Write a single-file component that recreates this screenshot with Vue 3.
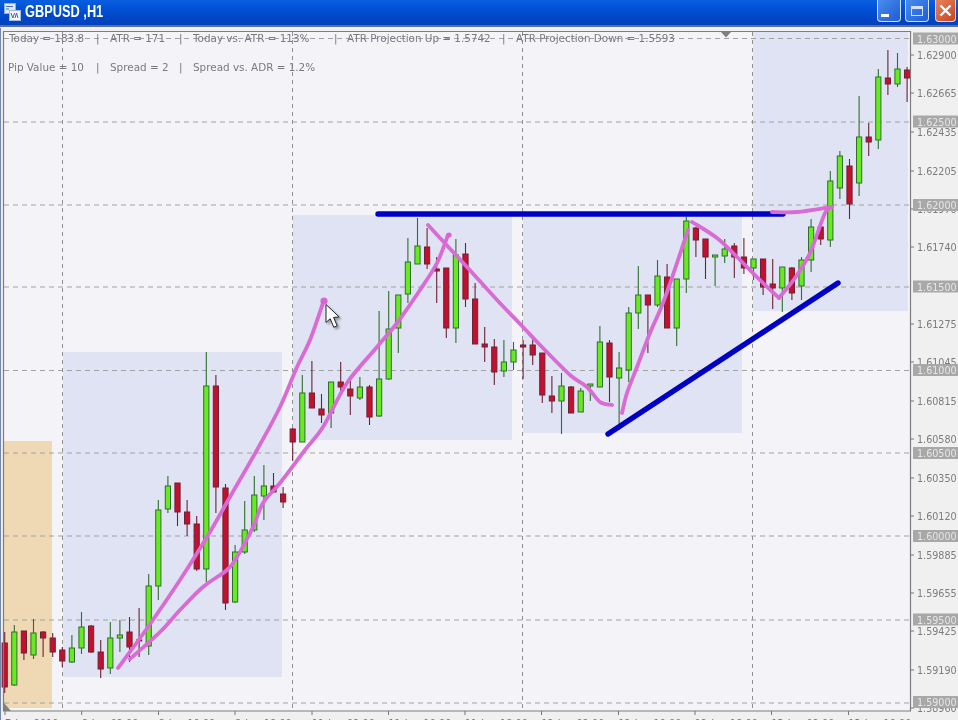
<template>
  <div class="window">
    <header class="titlebar">
      <svg class="app-icon" width="17" height="18" viewBox="0 0 17 18">
        <rect x="0.5" y="0.5" width="11" height="10" fill="#dfe8f6" stroke="#8fb0e0" />
        <rect x="5.5" y="7.5" width="11" height="10" fill="#f4f7fc" stroke="#a0bce6" />
        <path d="M2 3.5h7M2 6h3" stroke="#4a6fb0" />
        <path d="M7 10l1.8 5 1.8-5M11 15l1.5-5 1.5 5" stroke="#3f66a8" fill="none" />
      </svg>
      <span class="title">GBPUSD ,H1</span>
      <div class="win-buttons">
        <button class="win-btn">
          <span class="min-glyph"></span>
        </button>
        <button class="win-btn">
          <span class="max-glyph"></span>
        </button>
        <button class="win-btn close">
          <svg width="13" height="13" viewBox="0 0 13 13">
            <path d="M1.5 1.5l10 10M11.5 1.5l-10 10" stroke="#fff" stroke-width="2.4" />
          </svg>
        </button>
      </div>
    </header>

    <div class="frame">
      <svg class="chart" viewBox="0 28 958 692" width="958" height="692">
        <rect x="4" y="32" width="906" height="679" fill="#f4f4f8" />
        <!-- session boxes -->
        <rect x="4" y="441" width="48" height="267" fill="#efd9b5" />
        <rect
          v-for="b in boxes"
          :key="b.x"
          :x="b.x"
          :y="b.y"
          :width="b.w"
          :height="b.h"
          fill="#dfe3f4"
        />

        <!-- grid -->
        <line
          v-for="y in gridY"
          :key="'h' + y"
          x1="4"
          x2="910"
          :y1="y"
          :y2="y"
          class="grid"
        />
        <line
          v-for="x in gridX"
          :key="'v' + x"
          :x1="x"
          :x2="x"
          y1="32"
          y2="711"
          class="grid vertical"
        />

        <!-- candles -->
        <g v-for="c in candleList" :key="c.i">
          <line :x1="c.x" :x2="c.x" :y1="c.high" :y2="c.low" :stroke="c.wick" stroke-width="1.1" />
          <rect
            :x="c.x - 2.6"
            :y="c.top"
            width="5.2"
            :height="c.height"
            :fill="c.fill"
            :stroke="c.wick"
            stroke-width="1"
          />
        </g>

        <!-- hand drawn lines -->
        <line x1="378" y1="214" x2="783" y2="214" class="blue" />
        <line x1="608" y1="434" x2="838" y2="283" class="blue" />
        <path v-for="(d, i) in strokes" :key="i" :d="d" class="pink" />
        <circle cx="324" cy="301" r="3.6" fill="#d765d2" />
        <circle cx="449" cy="235" r="2.6" fill="#d765d2" />

        <!-- frame lines -->
        <path d="M3.5 711V31.5H910.5V711H3.5Z" class="frame-line" />
        <rect x="0" y="28" width="1" height="692" fill="#7486a8" />
        <path d="M721 32h10l-5 5.5z" fill="#808080" />
        <path d="M4 703v8h7z" fill="#808080" />

        <!-- info text -->
        <text v-for="t in infoTexts" :key="t.x + t.text" :x="t.x" :y="t.y" class="info">{{ t.text }}</text>

        <!-- price axis -->
        <g v-for="p in prices" :key="p.text">
          <line x1="910" x2="914" :y1="p.y" :y2="p.y" stroke="#777" />
          <text x="917" :y="p.y + 4" class="price">{{ p.text }}</text>
        </g>
        <g v-for="p in boxedPrices" :key="p.text">
          <rect x="913" :y="p.y - 6" width="45" height="12" fill="#a8a8a8" />
          <text x="917" :y="p.y + 4" class="price boxed">{{ p.text }}</text>
        </g>

        <!-- time axis -->
        <g v-for="t in times" :key="t.x">
          <line :x1="t.x" :x2="t.x" y1="711" y2="715" stroke="#777" />
          <text :x="t.x" y="727" class="time">{{ t.text }}</text>
        </g>

        <!-- mouse pointer -->
        <path
          d="M326 304.5v18l4.2-3.8 3.6 8.6 3.4-1.5-3.6-8.4 5.6-.4z"
          fill="#fff"
          stroke="#222"
          stroke-width="1"
          class="pointer"
        />
      </svg>
    </div>
  </div>
</template>

<script setup>
import { computed } from 'vue'

const boxes = [
  { x: 63, y: 352, w: 219, h: 325 },
  { x: 293, y: 215, w: 219, h: 225 },
  { x: 523, y: 214, w: 219, h: 219 },
  { x: 753, y: 32, w: 155, h: 279 },
]

const gridY = [38.5, 122, 205, 287, 370.5, 453, 536, 620, 703]
const gridX = [62.5, 292.5, 522.5, 752.5]

// top, bottom, high, low in page pixels, one row per hourly bar. up = green
const bars = [
  [643, 687, 632, 693, 0], [632, 685, 625, 686, 1], [631, 653, 631, 660, 0], [633, 655, 619, 659, 1],
  [632, 638, 631, 657, 0], [638, 652, 633, 657, 0], [650, 661, 647, 667, 0], [648, 662, 635, 663, 1],
  [627, 648, 612, 654, 1], [626, 652, 625, 653, 0], [652, 669, 640, 678, 0], [638, 668, 622, 674, 1],
  [635, 638, 620, 652, 1], [632, 647, 617, 662, 0], [640, 641, 608, 657, 0], [586, 646, 574, 655, 1],
  [510, 586, 500, 600, 1], [486, 509, 476, 513, 1], [483, 512, 483, 526, 0], [512, 524, 500, 536, 0],
  [524, 569, 516, 571, 0], [386, 569, 352, 582, 1], [386, 487, 375, 513, 0], [488, 603, 484, 610, 0],
  [552, 602, 545, 603, 1], [530, 552, 501, 554, 1], [495, 530, 476, 532, 1], [486, 496, 465, 520, 1],
  [486, 492, 473, 493, 0], [494, 502, 487, 508, 0], [429, 442, 428, 461, 0], [393, 442, 375, 442, 1],
  [393, 408, 361, 408, 0], [409, 415, 394, 423, 0], [382, 413, 382, 428, 1], [382, 387, 362, 393, 0],
  [389, 396, 380, 415, 0], [387, 398, 377, 400, 1], [387, 417, 385, 425, 0], [379, 416, 311, 417, 1],
  [329, 379, 291, 380, 1], [295, 328, 295, 353, 1], [262, 294, 238, 303, 1], [246, 264, 218, 264, 1],
  [247, 264, 228, 269, 0], [269, 271, 257, 303, 0], [268, 328, 268, 338, 0], [255, 328, 239, 343, 1],
  [254, 299, 243, 307, 0], [299, 344, 283, 344, 0], [344, 347, 327, 362, 0], [347, 372, 339, 385, 0],
  [362, 371, 340, 377, 1], [350, 362, 342, 370, 1], [345, 347, 340, 379, 0], [345, 355, 339, 365, 0],
  [353, 395, 353, 403, 0], [396, 401, 376, 413, 0], [386, 401, 373, 434, 1], [387, 413, 386, 413, 0],
  [391, 412, 388, 412, 1], [384, 386, 384, 401, 1], [342, 387, 326, 387, 1], [343, 377, 340, 402, 0],
  [368, 378, 352, 430, 1], [313, 370, 307, 382, 1], [295, 313, 266, 329, 1], [295, 305, 295, 353, 0],
  [276, 305, 260, 307, 1], [277, 328, 264, 328, 0], [279, 328, 279, 346, 1], [221, 279, 217, 293, 1],
  [228, 240, 227, 257, 0], [239, 257, 239, 279, 0], [255, 257, 255, 286, 1], [249, 256, 239, 263, 1],
  [246, 257, 243, 278, 0], [257, 268, 238, 274, 0], [259, 268, 259, 280, 1], [259, 287, 259, 295, 0],
  [284, 288, 259, 309, 0], [267, 288, 267, 312, 1], [268, 293, 267, 300, 0], [260, 286, 257, 300, 1],
  [227, 260, 219, 272, 1], [227, 239, 227, 245, 0], [181, 240, 171, 247, 1], [156, 188, 151, 199, 1],
  [166, 204, 159, 219, 0], [137, 183, 96, 196, 1], [137, 142, 123, 156, 0], [77, 140, 69, 149, 1],
  [78, 84, 50, 95, 0], [69, 84, 53, 87, 1], [70, 78, 67, 102, 0],
]

const candleList = computed(() =>
  bars.map(([top, bottom, high, low, up], i) => ({
    i,
    x: 4.7 + i * 9.6,
    top,
    height: bottom - top,
    high,
    low,
    fill: up ? '#68ea22' : '#c2102f',
    wick: up ? '#2f6f2c' : '#6e2234',
  })),
)

// pen strokes, as points the curve runs through
const penLines = [
  [[118, 668], [148, 627], [180, 580], [207, 537], [230, 497], [257, 450], [280, 407], [297, 367], [310, 340], [323, 303]],
  [[130, 659], [160, 632], [180, 610], [203, 587], [227, 570], [237, 557], [253, 527], [263, 503], [280, 483], [305, 450], [323, 427], [347, 383], [377, 347], [397, 323], [420, 290], [437, 263], [448, 235]],
  [[428, 225], [440, 238], [467, 267], [497, 300], [523, 327], [540, 345], [570, 375], [587, 387], [600, 402], [612, 405]],
  [[622, 413], [627, 393], [637, 367], [650, 333], [663, 303], [677, 263], [688, 230]],
  [[692, 222], [717, 238], [737, 257], [760, 280], [779, 298]],
  [[779, 298], [795, 278], [810, 253], [825, 213], [832, 207]],
  [[772, 212], [797, 212], [831, 207]],
]

const smooth = (pts) => {
  let d = `M${pts[0][0]} ${pts[0][1]}`
  for (let i = 0; i < pts.length - 1; i++) {
    const p0 = pts[i - 1] || pts[i]
    const p1 = pts[i]
    const p2 = pts[i + 1]
    const p3 = pts[i + 2] || p2
    const c1x = p1[0] + (p2[0] - p0[0]) / 6
    const c1y = p1[1] + (p2[1] - p0[1]) / 6
    const c2x = p2[0] - (p3[0] - p1[0]) / 6
    const c2y = p2[1] - (p3[1] - p1[1]) / 6
    d += `C${c1x} ${c1y} ${c2x} ${c2y} ${p2[0]} ${p2[1]}`
  }
  return d
}

const strokes = penLines.map(smooth)

const infoTexts = [
  { x: 9, y: 42, text: 'Today = 183.8' },
  { x: 96, y: 42, text: '|' },
  { x: 110, y: 42, text: 'ATR = 171' },
  { x: 179, y: 42, text: '|' },
  { x: 193, y: 42, text: 'Today vs. ATR = 113%' },
  { x: 334, y: 42, text: '|' },
  { x: 347, y: 42, text: 'ATR Projection Up = 1.5742' },
  { x: 502, y: 42, text: '|' },
  { x: 516, y: 42, text: 'ATR Projection Down = 1.5593' },
  { x: 8, y: 71, text: 'Pip Value = 10' },
  { x: 96, y: 71, text: '|' },
  { x: 110, y: 71, text: 'Spread = 2' },
  { x: 179, y: 71, text: '|' },
  { x: 193, y: 71, text: 'Spread vs. ADR = 1.2%' },
]

const prices = [
  { y: 55, text: '1.62900' }, { y: 93, text: '1.62665' }, { y: 132, text: '1.62435' },
  { y: 171, text: '1.62205' }, { y: 209, text: '1.61970' }, { y: 247, text: '1.61740' },
  { y: 324, text: '1.61275' }, { y: 362, text: '1.61045' }, { y: 401, text: '1.60815' },
  { y: 439, text: '1.60580' }, { y: 478, text: '1.60350' }, { y: 516, text: '1.60120' },
  { y: 555, text: '1.59885' }, { y: 593, text: '1.59655' }, { y: 631, text: '1.59425' },
  { y: 670, text: '1.59190' }, { y: 708, text: '1.58960' },
]

const boxedPrices = [
  { y: 38.5, text: '1.63000' }, { y: 121.5, text: '1.62500' }, { y: 205, text: '1.62000' },
  { y: 286.5, text: '1.61500' }, { y: 370, text: '1.61000' }, { y: 453, text: '1.60500' },
  { y: 536, text: '1.60000' }, { y: 619.5, text: '1.59500' }, { y: 702, text: '1.59000' },
]

const times = [
  { x: 5, text: '7 Jan 2010' }, { x: 81.7, text: '8 Jan 02:00' }, { x: 158.5, text: '8 Jan 10:00' },
  { x: 235, text: '8 Jan 18:00' }, { x: 312, text: '11 Jan 02:00' }, { x: 388.5, text: '11 Jan 10:00' },
  { x: 465, text: '11 Jan 18:00' }, { x: 541.5, text: '12 Jan 02:00' }, { x: 618.5, text: '12 Jan 10:00' },
  { x: 695, text: '12 Jan 18:00' }, { x: 771.5, text: '13 Jan 02:00' }, { x: 848.5, text: '13 Jan 10:00' },
]
</script>

<style>
html,
body {
  margin: 0;
  overflow: hidden;
  background: #f3f3f6;
}
</style>

<style scoped>
.window {
  width: 958px;
  height: 720px;
  display: flex;
  flex-direction: column;
  overflow: hidden;
  background: #f3f3f6;
  font-family: "DejaVu Sans", sans-serif;
}

.titlebar {
  height: 25px;
  flex: none;
  display: flex;
  align-items: center;
  padding: 0 2px 2px 4px;
  box-sizing: border-box;
  background: linear-gradient(#0a5fe0 0%, #0153d8 30%, #0148c8 65%, #0141bd 100%);
}

.app-icon {
  flex: none;
  margin-right: 4px;
}

.title {
  color: #fff;
  font-family: "Liberation Sans", Arial, sans-serif;
  font-size: 16px;
  font-weight: 700;
  white-space: pre;
  transform: scaleX(0.8);
  transform-origin: left center;
}

.win-buttons {
  margin-left: auto;
  display: flex;
  gap: 4px;
  align-self: flex-start;
}

.win-btn {
  width: 24px;
  height: 22px;
  padding: 0;
  box-sizing: border-box;
  display: flex;
  align-items: center;
  justify-content: center;
  border: 1px solid #cfe0f8;
  border-top: none;
  border-radius: 0 0 4px 4px;
  background: linear-gradient(135deg, #4b8cec, #1d5cd6);
}

.win-btn.close {
  width: 21px;
  margin-left: 2px;
  background: linear-gradient(135deg, #e8845e, #c9421f);
}

.min-glyph {
  width: 8px;
  height: 3px;
  margin: 9px 8px 0 0;
  background: #fff;
}

.max-glyph {
  width: 12px;
  height: 10px;
  box-sizing: border-box;
  border: 1px solid #cfe0f8;
  border-top: 3px solid #cfe0f8;
}

.frame {
  flex: 1;
  min-height: 0;
  padding-top: 3px;
  background: linear-gradient(#5d6f92 0, #5d6f92 2px, #f0f0f0 2px);
  overflow: hidden;
}

.chart {
  display: block;
  overflow: hidden;
  filter: blur(0.35px);
}

.grid {
  stroke: #a2a2a2;
  stroke-width: 1;
  stroke-dasharray: 5 4;
}

.grid.vertical {
  stroke: #909090;
  stroke-dasharray: 4 4;
}

.blue {
  stroke: #0000c4;
  stroke-width: 5.4;
  stroke-linecap: round;
}

.pink {
  fill: none;
  stroke: #d96bd4;
  stroke-width: 3.8;
  stroke-linecap: round;
  stroke-linejoin: round;
}

.frame-line {
  fill: none;
  stroke: #7d7d7d;
  stroke-width: 1.2;
}

.info {
  fill: #7a7a7a;
  font-size: 10.4px;
  white-space: pre;
}

.price {
  fill: #7c7c7c;
  font-size: 9.6px;
}

.price.boxed {
  fill: #e6e6e6;
}

.time {
  fill: #777;
  font-size: 9.6px;
  word-spacing: 1px;
}

.pointer {
  filter: drop-shadow(2px 2px 1px rgba(60, 60, 60, 0.45));
}
</style>
